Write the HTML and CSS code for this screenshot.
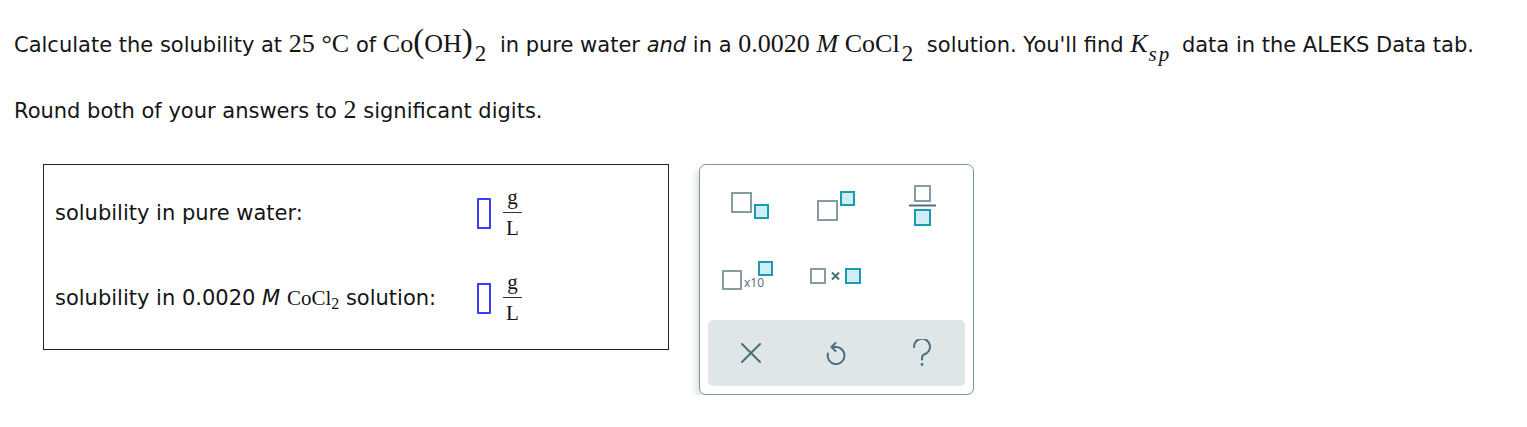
FILE: index.html
```html
<!DOCTYPE html>
<html>
<head>
<meta charset="utf-8">
<link rel="stylesheet" href="styles.css">
</head>
<body>
<div class="page">
  <p class="q line1">Calculate the solubility at <span class="m">25</span> <span class="m">°C</span> of <span class="m">Co<span class="paren">(</span>OH<span class="paren">)</span><sub class="msub">2</sub></span> in pure water <i>and</i> in a <span class="m">0.0020</span> <span class="m mi">M</span> <span class="m">CoCl<sub class="msub">2</sub></span> solution. You'll find <span class="m mi">K<sub class="msub ksub">sp</sub></span> data in the ALEKS Data tab.</p>
  <p class="q line2">Round both of your answers to <span class="m">2</span> significant digits.</p>

  <div class="work">
    <div class="answers">
      <div class="arow">
        <span class="label">solubility in pure water:</span>
        <span class="input"></span>
        <span class="frac"><span class="num">g</span><span class="bar"></span><span class="den">L</span></span>
      </div>
      <div class="arow">
        <span class="label">solubility in 0.0020 <i>M</i> <span class="sm">CoCl<sub>2</sub></span> solution:</span>
        <span class="input"></span>
        <span class="frac"><span class="num">g</span><span class="bar"></span><span class="den">L</span></span>
      </div>
    </div>

    <div class="panel">
      <div class="tools">
        <div class="tool">
          <svg width="39" height="28" viewBox="0 0 39 28">
            <rect x="1" y="1" width="19" height="19" class="g"/>
            <rect x="24" y="13" width="13" height="13" class="t"/>
          </svg>
        </div>
        <div class="tool">
          <svg width="39" height="30" viewBox="0 0 39 30">
            <rect x="1" y="10" width="19" height="19" class="g"/>
            <rect x="24" y="1" width="13" height="13" class="t"/>
          </svg>
        </div>
        <div class="tool">
          <svg width="27" height="42" viewBox="0 0 27 42">
            <rect x="6" y="1" width="15" height="15" class="g"/>
            <line x1="0" y1="20.5" x2="27" y2="20.5" class="fl"/>
            <rect x="6" y="25" width="15" height="15" class="t"/>
          </svg>
        </div>
        <div class="tool t-x10">
          <svg width="52" height="30" viewBox="0 0 52 30">
            <rect x="1" y="10" width="18" height="18" class="g"/>
            <text x="22" y="26" class="x10">x10</text>
            <rect x="37" y="1" width="13" height="13" class="t"/>
          </svg>
        </div>
        <div class="tool">
          <svg width="52" height="17" viewBox="0 0 52 17">
            <rect x="1" y="1" width="14" height="14" class="g"/>
            <path d="M22 4.5 L29 11.5 M29 4.5 L22 11.5" class="xm"/>
            <rect x="36" y="1" width="14" height="14" class="t"/>
          </svg>
        </div>
        <div class="tool"></div>
      </div>
      <div class="actions">
        <div class="act">
          <svg width="22" height="22" viewBox="0 0 22 22"><path d="M2 2 L20 20 M20 2 L2 20" class="ai"/></svg>
        </div>
        <div class="act">
          <svg width="24" height="26" viewBox="0 0 24 26"><path d="M8 7 H12 A8.5 8.5 0 1 1 3.8 13.5 M11.5 3 L7.5 7 L11.5 11" class="ai"/></svg>
        </div>
        <div class="act">
          <svg width="22" height="28" viewBox="0 0 22 28"><path d="M3 8 A8 8 0 1 1 13 15.5 Q11 16.5 11 19 V20.5" class="ai"/><circle cx="11" cy="25.5" r="1.4" class="dot"/></svg>
        </div>
      </div>
    </div>
  </div>
</div>
</body>
</html>
```
FILE: styles.css
```css
html, body {
  margin: 0;
  padding: 0;
  background: #fff;
}
body {
  font-family: Verdana, "DejaVu Sans", sans-serif;
  font-size: 21px;
  color: #151515;
}
.page {
  padding: 0 0 0 14px;
}
.q {
  margin: 0;
  white-space: nowrap;
}
.line1 {
  padding-top: 29px;
  line-height: 30px;
}
.line2 {
  padding-top: 35px;
  line-height: 30px;
}
.m {
  font-family: "Liberation Serif", "Times New Roman", serif;
  font-size: 26px;
}
.mi {
  font-style: italic;
}
.paren {
  font-size: 33px;
  line-height: 0;
}
.msub {
  font-size: 23px;
  vertical-align: -9px;
  line-height: 0;
  margin-left: 2px;
  margin-right: 7px;
}
.ksub {
  font-size: 21px;
  vertical-align: -9px;
  margin-left: 1px;
  margin-right: 4px;
  letter-spacing: 2px;
}
.work {
  display: flex;
  align-items: flex-start;
  gap: 30px;
  margin: 38px 0 0 29px;
}
.answers {
  width: 613px;
  height: 167px;
  border: 1px solid #222;
  padding: 17px 0 0 11px;
  display: flex;
  flex-direction: column;
  gap: 23px;
}
.arow {
  display: flex;
  align-items: center;
  height: 62px;
}
.label {
  width: 422px;
  white-space: nowrap;
}
.sm {
  font-family: "Liberation Serif", "Times New Roman", serif;
  font-size: 21px;
}
.sm sub {
  font-size: 16px;
  vertical-align: -4px;
  line-height: 0;
}
.input {
  width: 10px;
  height: 27px;
  border: 2px solid #3c3cf4;
  border-radius: 1px;
}
.frac {
  display: flex;
  flex-direction: column;
  align-items: center;
  margin-left: 12px;
  width: 19px;
  font-family: "Liberation Serif", "Times New Roman", serif;
  font-size: 21px;
  line-height: 23px;
}
.frac .bar {
  width: 19px;
  height: 1px;
  background: #333;
  margin: 3px 0 4px;
}
.panel {
  width: 257px;
  border: 1px solid #7e979f;
  border-radius: 7px;
  padding: 6px 8px 8px;
  box-shadow: -3px 4px 6px rgba(60, 90, 100, 0.18);
  background: #fff;
}
.tools {
  display: grid;
  grid-template-columns: repeat(3, 1fr);
  grid-template-rows: 70px 70px;
  margin-bottom: 9px;
}
.tool {
  display: flex;
  align-items: center;
  justify-content: center;
}
.t-x10 {
  padding-right: 5px;
}
.g {
  fill: #fff;
  stroke: #879ba2;
  stroke-width: 2;
}
.t {
  fill: #cdeef4;
  stroke: #1a9bb4;
  stroke-width: 2;
}
.fl {
  stroke: #52707b;
  stroke-width: 2;
}
.x10 {
  font-family: "Open Sans", "DejaVu Sans", sans-serif;
  font-size: 12px;
  fill: #4d6c77;
}
.xm {
  stroke: #4d6c77;
  stroke-width: 2;
  fill: none;
}
.actions {
  height: 66px;
  background: #dfe6e8;
  border-radius: 5px;
  display: grid;
  grid-template-columns: repeat(3, 1fr);
}
.act {
  display: flex;
  align-items: center;
  justify-content: center;
}
.ai {
  fill: none;
  stroke: #4a6e7b;
  stroke-width: 2;
  stroke-linecap: round;
  stroke-linejoin: round;
}
.dot {
  fill: #4a6e7b;
}
```
